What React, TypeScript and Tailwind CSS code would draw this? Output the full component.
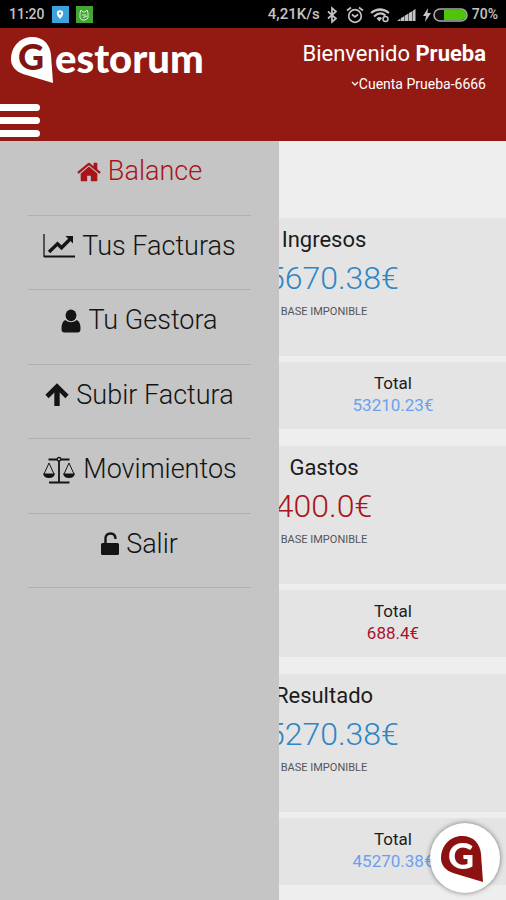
import type { ReactNode } from "react";

const sections = [
  { title: "Ingresos", amount: "45670.38€", total: "53210.23€", color: "text-[#2e86c5]", totalColor: "text-[#6b9ff0]" },
  { title: "Gastos", amount: "400.0€", total: "688.4€", color: "text-[#a8141a]", totalColor: "text-[#a8142c]" },
  { title: "Resultado", amount: "45270.38€", total: "45270.38€", color: "text-[#2e86c5]", totalColor: "text-[#6b9ff0]" },
];

function HomeIcon() {
  return (
    <svg viewBox="0 240 1664 1300" className="w-6 h-5" fill="currentColor" aria-hidden="true">
      <path d="M1408 992v480q0 26-19 45t-45 19H960v-384H704v384H320q-26 0-45-19t-19-45V992q0-1 .5-3t.5-3l575-474 575 474q1 2 1 6zm223-69l-62 74q-8 9-21 11h-3q-13 0-21-7L832 424 140 1001q-12 8-24 7-13-2-21-11l-62-74q-8-10-7-23.5T37 878l719-599q32-26 76-26t76 26l244 204V288q0-14 9-23t23-9h192q14 0 23 9t9 23v408l219 182q10 8 11 21.5t-7 23.5z" />
    </svg>
  );
}

function ChartIcon() {
  return (
    <svg viewBox="0 0 32 24" className="w-8 h-6" fill="none" stroke="currentColor" aria-hidden="true">
      <path d="M1 0V23" strokeWidth="1.300" />
      <path d="M1 22.500H32" strokeWidth="2" />
      <path d="M6 18L14.500 9.800L18.500 13.800L27 5.300" strokeWidth="3.400" />
      <path d="M22.500 2H30V9.500z" fill="currentColor" stroke="none" />
    </svg>
  );
}

function UserIcon() {
  return (
    <svg viewBox="0 0 20 24" className="w-5 h-6" fill="currentColor" aria-hidden="true">
      <ellipse cx="10" cy="6.300" rx="5.400" ry="5.900" />
      <path d="M4.200 11Q10 15.500 15.800 11Q19.500 12.500 19.500 20Q19.500 23.500 16.500 23.500H3.500Q.5 23.500.5 20Q.5 12.500 4.200 11z" />
    </svg>
  );
}

function ArrowIcon() {
  return (
    <svg viewBox="0 0 24 24" className="size-6" fill="none" stroke="currentColor" aria-hidden="true">
      <path d="M2 13.500L12 3.500L22 13.500" strokeWidth="4.600" />
      <path d="M12 4V23" strokeWidth="5.400" />
    </svg>
  );
}

function ScaleIcon() {
  return (
    <svg viewBox="0 0 34 28" className="w-[34px] h-7" fill="none" stroke="currentColor" aria-hidden="true">
      <path d="M6.500 3.500H27.500M17 4V26M7 26.500H27.500" strokeWidth="1.800" />
      <circle cx="17" cy="3.300" r="1.800" fill="#c5c5c5" strokeWidth="1.300" />
      <path d="M2 18L7 7L12 18M22 18L27 7L32 18" strokeWidth="1" />
      <path d="M1 17.500H13Q12 22 7 22T1 17.500zM21 17.500H33Q32 22 27 22T21 17.500z" fill="currentColor" stroke="none" />
    </svg>
  );
}

function UnlockIcon() {
  return (
    <svg viewBox="0 0 18 24" className="w-[18px] h-6" aria-hidden="true">
      <path d="M4.500 12V6.500Q4.500 1.500 9.500 1.500T14.500 7" fill="none" stroke="currentColor" strokeWidth="2.400" />
      <rect x="0" y="11" width="18" height="12" rx="1.500" fill="currentColor" />
    </svg>
  );
}

const menu: { label: string; icon: ReactNode; active?: boolean }[] = [
  { label: "Balance", icon: <HomeIcon />, active: true },
  { label: "Tus Facturas", icon: <ChartIcon /> },
  { label: "Tu Gestora", icon: <UserIcon /> },
  { label: "Subir Factura", icon: <ArrowIcon /> },
  { label: "Movimientos", icon: <ScaleIcon /> },
  { label: "Salir", icon: <UnlockIcon /> },
];

function LogoMark({ letter }: { letter: string }) {
  return (
    <svg viewBox="0 -6 42 54" className="w-[42px] h-[54px]" aria-hidden="true">
      <path d="M0 22C0 10 9 0 21 0C33 0 39 8 40 18L42 46L12 37C4 34 0 29 0 22z" fill="currentColor" />
      <text x="20" y="33" textAnchor="middle" fontFamily="Lato, sans-serif" fontWeight="900" fontSize="36" fill={letter}>
        G
      </text>
    </svg>
  );
}

function StatusBar() {
  return (
    <div className="h-7 bg-black text-[#c4c4c4] flex items-center justify-between pl-[9px] pr-2 pt-px text-[14px] font-medium">
      <div className="flex items-center gap-[7px]">
        <span>11:20</span>
        <span className="size-[17px] bg-[#3ba3dc] flex items-center justify-center">
          <svg viewBox="0 0 10 12" className="w-2 h-3" aria-hidden="true">
            <path d="M5 0a4 4 0 0 1 4 4Q9 7 5 11Q1 7 1 4A4 4 0 0 1 5 0z" fill="#fff" />
            <circle cx="5" cy="4" r="1.500" fill="#3ba3dc" />
          </svg>
        </span>
        <span className="size-[17px] bg-[#45a532] flex items-center justify-center">
          <svg viewBox="0 0 12 12" className="size-3" fill="none" stroke="#d5f0cf" aria-hidden="true">
            <path d="M2 4L3 1L5 3H7L9 1L10 4V9L7 11H4L2 9zM4 6H8M5 8.500L9 7" />
          </svg>
        </span>
      </div>
      <div className="flex items-center">
        <span className="text-[15px]">4,21K/s</span>
        <svg viewBox="0 0 12 18" className="w-3 h-[18px] ml-[6px]" fill="none" stroke="currentColor" strokeWidth="1.700" aria-hidden="true">
          <path d="M2 5.500L10 12.500L6 16V2L10 5.500L2 12.500" />
        </svg>
        <svg viewBox="0 0 18 18" className="size-[18px] ml-2" fill="none" stroke="currentColor" strokeWidth="1.700" aria-hidden="true">
          <circle cx="9" cy="10" r="6.300" />
          <path d="M1 4.500L5 1.500M17 4.500L13 1.500M6 8.500L9 11L12 8.500" />
        </svg>
        <svg viewBox="0 0 20 16" className="w-5 h-4 ml-[6px]" fill="none" stroke="currentColor" strokeWidth="2.200" aria-hidden="true">
          <path d="M1 6Q10-1 19 6M4 9.500Q10 4 15.500 8.500" />
          <path d="M6.500 11.500Q9.500 9 12 11L9.500 14.500z" fill="currentColor" stroke="none" />
          <circle cx="15.500" cy="12" r="2.500" strokeWidth="1.500" />
        </svg>
        <svg viewBox="0 0 20 14" className="w-5 h-[14px] ml-[6px]" fill="currentColor" aria-hidden="true">
          <path d="M1 13L4.500 10.500V13zM5 13V10L8.500 8V13zM9 13V7.500L12.500 5.500V13zM13 13V5L16.500 3V13zM17 13V2.500L19.500 1V13z" />
        </svg>
        <svg viewBox="0 0 10 16" className="w-[10px] h-4 ml-[6px]" fill="currentColor" aria-hidden="true">
          <path d="M6 1L1 9H4L3 15L9 6H5.500z" />
        </svg>
        <svg viewBox="0 0 35 14" className="w-[35px] h-[14px] ml-px" aria-hidden="true">
          <rect x="1" y="1" width="33" height="12" rx="6" fill="#111" stroke="#aaa" strokeWidth="1.600" />
          <path d="M11 2H28.500A5 5 0 0 1 28.500 12H11z" fill="#4ec40c" />
        </svg>
        <span className="ml-1">70%</span>
      </div>
    </div>
  );
}

export default function App() {
  return (
    <div className="min-h-screen flex flex-col bg-[#eeeeee] text-[#1c1c1c] font-[Roboto,sans-serif] overflow-hidden">
      <StatusBar />

      <header className="h-[113px] bg-[#921a13] text-white flex justify-between">
        <div className="flex flex-col justify-between pb-1">
          <a href="#" aria-label="Gestorum" className="flex items-start pl-[11px] pt-[3px]">
            <LogoMark letter="#7f1410" />
            <span className="font-[Lato,sans-serif] font-black text-[40px] leading-[54px] ml-[2px]">estorum</span>
          </a>
          <button type="button" aria-label="Menú" className="w-10 flex flex-col gap-[6px]">
            <span className="h-[7px] w-full rounded-r-sm bg-white" />
            <span className="h-[7px] w-full rounded-r-sm bg-white" />
            <span className="h-[7px] w-full rounded-r-sm bg-white" />
          </button>
        </div>
        <div className="pr-5 pt-3 text-right">
          <p className="text-[22px] leading-7">
            Bienvenido <b>Prueba</b>
          </p>
          <button type="button" className="inline-flex items-center text-[14px] leading-5 mt-[6px]">
            <svg viewBox="0 0 8 6" className="w-2 h-[6px]" fill="none" stroke="currentColor" strokeWidth="1.300" aria-hidden="true">
              <path d="M1 1L4 4L7 1" />
            </svg>
            Cuenta Prueba-6666
          </button>
        </div>
      </header>

      <div className="relative flex-1">
        <main className="pt-[77px] flex flex-col gap-[17px]">
          {sections.map((s) => (
            <section key={s.title} className="flex flex-col gap-[6px] text-center">
              <div className="h-[138px] bg-[#e4e4e4] pl-[142px] pt-2">
                <h2 className="text-[22px] leading-7">{s.title}</h2>
                <p className={`text-[32px] leading-10 mt-1 font-light ${s.color}`}>{s.amount}</p>
                <p className="text-[11px] leading-4 mt-[6px] text-[#555]">BASE IMPONIBLE</p>
              </div>
              <div className="h-[67px] bg-[#e4e4e4] pl-[280px] pt-[10px]">
                <h3 className="text-[17px] leading-[22px]">Total</h3>
                <p className={`text-[17px] leading-[22px] ${s.totalColor}`}>{s.total}</p>
              </div>
            </section>
          ))}
        </main>

        <nav className="absolute inset-y-0 left-0 w-[279px] bg-[#c5c5c5] px-7">
          <ul className="h-[447px] flex flex-col">
            {menu.map((item) => (
              <li key={item.label} className="flex-1 border-b border-[#b0b0b0]">
                <a
                  href="#"
                  className={`flex items-center justify-center gap-[7px] h-[61px] text-[27px] font-light whitespace-nowrap ${item.active ? "text-[#a8141a]" : "text-[#141414]"}`}
                >
                  {item.icon}
                  {item.label}
                </a>
              </li>
            ))}
          </ul>
        </nav>
      </div>

      <button
        type="button"
        aria-label="Gestorum"
        className="fixed right-[6px] bottom-[7px] size-[70px] rounded-full bg-white text-[#8c1212] shadow-[0_0_5px_rgba(0,0,0,0.5)] flex items-center justify-center pr-[7px] pb-[2px]"
      >
        <LogoMark letter="#ffffff" />
      </button>
    </div>
  );
}
